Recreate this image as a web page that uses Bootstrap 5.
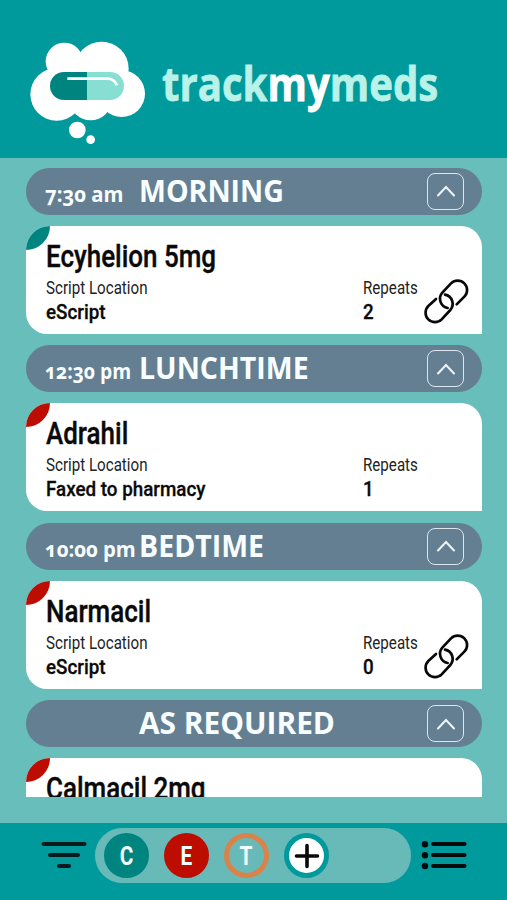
<!DOCTYPE html>
<html lang="en">
<head>
<meta charset="utf-8">
<meta name="viewport" content="width=device-width, initial-scale=1">
<title>trackmymeds</title>
<link rel="stylesheet" href="https://cdn.jsdelivr.net/npm/bootstrap@5.3.0/dist/css/bootstrap.min.css">
<style>
  body { background: #68bebb; color: #0a0a0a; font-family: Roboto, "Liberation Sans", sans-serif; }
  .screen { height: 900px; }
  .brand-bar { height: 158px; background: #009a9c; padding-left: 20px; }
  .brand-name { font: 700 46px/60px "Open Sans", "Noto Sans", sans-serif; color: #b9f2e8; transform: scaleX(.873); transform-origin: left; margin: 8px 0 0 2px; white-space: nowrap; -webkit-text-stroke: .8px currentColor; }
  .brand-name b { color: #fff; font-weight: 700; }
  .brand-logo { margin-top: 24px; }
  .schedule { height: 639px; padding: 9.5px 25px 0 26px; }
  .slot-bar { height: 47px; background: #647f92; border-radius: 24px; color: #f8fdff; padding: 0 18px 0 19px; margin-bottom: 11px; font-family: "Open Sans", "Noto Sans", sans-serif; font-weight: 700; white-space: nowrap; }
  .slot-time { width: 94px; font-size: 20.5px; line-height: 45px; font-feature-settings: "onum"; }
  .slot-name { font-size: 31px; line-height: 45px; margin: 0; font-weight: 700; }
  .squeeze { display: inline-block; transform-origin: left; }
  .slot-time .squeeze { transform: scaleX(.99); }
  .slot-time .squeeze.snug { transform: scaleX(.94); }
  .slot-name .squeeze { transform: scaleX(.92); }
  .slot-name .squeeze.roomy { transform: scaleX(.963); }
  .toggle { width: 37px; height: 37px; border: 1.6px solid #dbe6ee; border-radius: 8px; background: none; }
  .med { height: 108px; background: #fff; border-radius: 24px 21px 0 21px; padding: 13px 13px 0 20px; margin-bottom: 11.6px; white-space: nowrap; }
  .leaf { width: 24px; height: 24px; top: 0; left: 0; }
  .med-name { font-size: 31px; line-height: 36px; font-weight: 500; margin: 0 0 1px; -webkit-text-stroke: .4px currentColor; }
  .med-name .squeeze { transform: scaleX(.838); }
  .field-label { font-size: 17.5px; line-height: 24px; color: #222; }
  .field-label .squeeze { transform: scaleX(.865); }
  .field-value { font-size: 20.5px; line-height: 24px; font-weight: 500; -webkit-text-stroke: .3px currentColor; }
  .field-value .squeeze { transform: scaleX(.917); }
  .where { width: 317px; }
  .repeats { width: 61px; }
  .link-icon { margin-top: 3px; }
  .spacer { height: 26px; }
  .tool-bar { height: 77px; background: #009a9c; padding: 5px 39px 0 40px; }
  .filters { width: 316px; height: 55px; border-radius: 27px; background: #67bab7; padding-left: 9px; gap: 15px; margin-right: 2px; }
  .chip { width: 45px; height: 45px; border: 5px solid transparent; color: #f4ffff; font-size: 26px; font-weight: 700; line-height: 1; }
  .chip .squeeze { transform: scaleX(.8); transform-origin: center; }
  .chip-c { background: #008480; border-color: #008480; }
  .chip-e { background: #bd0d00; border-color: #bd0d00; }
  .chip-t { border-color: #d9834b; }
  .chip-add { background: #fff; border-color: #009a9c; }
</style>
<script src="https://cdn.jsdelivr.net/npm/bootstrap@5.3.0/dist/js/bootstrap.bundle.min.js"></script>
</head>
<body>
<svg width="0" height="0" class="d-none">
  <symbol id="leaf" viewBox="0 0 24 24"><path d="M0 24A24 24 0 0 1 24 0A24 24 0 0 1 0 24Z" fill="currentColor"/></symbol>
  <symbol id="chevron" viewBox="0 0 20 14"><path d="M2 11.5L10 3L18 11.5" fill="none" stroke="#eef5fa" stroke-width="2" stroke-linecap="round"/></symbol>
  <symbol id="chain" viewBox="42 27 135 135"><path d="M140 103L163 80A28 28 0 0 0 123 40L97 68A28 28 0 0 0 113 114M78 87L55 108A28 28 0 0 0 95 148L121 120A28 28 0 0 0 105 74" fill="none" stroke="#080808" stroke-width="8" stroke-linecap="round"/></symbol>
</svg>
<div class="screen d-flex flex-column overflow-hidden">
  <header class="brand-bar d-flex align-items-center">
    <svg class="brand-logo flex-shrink-0" width="140" height="120" viewBox="0 0 420 360">
      <g fill="#fff"><circle cx="133" cy="91" r="56"/><circle cx="245" cy="113" r="81"/><circle cx="110" cy="190" r="79"/><circle cx="305" cy="188" r="70"/><circle cx="212" cy="205" r="63"/><path d="M130 110H300V240H130Z"/><circle cx="172" cy="297" r="25"/><circle cx="212" cy="326" r="13"/></g>
      <path d="M201 123H132A42 42 0 0 0 132 207H201Z" fill="#008480"/>
      <path d="M201 123H270A42 42 0 0 1 270 207H201Z" fill="#86dfd2"/>
      <path d="M142 143H262Q283 143 291 163" fill="none" stroke="#fff" stroke-width="8.5"/>
    </svg>
    <div class="brand-name">track<b>my</b>meds</div>
  </header>

  <main class="schedule overflow-hidden">
    <div class="slot-bar d-flex align-items-center">
      <div class="d-flex align-items-baseline flex-grow-1 align-self-start"><div class="slot-time"><span class="squeeze">7:30 am</span></div><h2 class="slot-name"><span class="squeeze">MORNING</span></h2></div>
      <button class="toggle p-0 d-flex align-items-center justify-content-center" aria-label="Collapse"><svg width="20" height="14"><use href="#chevron"/></svg></button>
    </div>
    <article class="med position-relative">
      <svg class="leaf position-absolute" style="color:#008480"><use href="#leaf"/></svg>
      <h3 class="med-name"><span class="squeeze">Ecyhelion 5mg</span></h3>
      <div class="d-flex align-items-start">
        <div class="where"><div class="field-label"><span class="squeeze">Script Location</span></div><div class="field-value"><span class="squeeze">eScript</span></div></div>
        <div class="repeats"><div class="field-label"><span class="squeeze">Repeats</span></div><div class="field-value"><span class="squeeze">2</span></div></div>
        <svg class="link-icon" width="45" height="45"><use href="#chain"/></svg>
      </div>
    </article>

    <div class="slot-bar d-flex align-items-center">
      <div class="d-flex align-items-baseline flex-grow-1 align-self-start"><div class="slot-time"><span class="squeeze snug">12:30 pm</span></div><h2 class="slot-name"><span class="squeeze">LUNCHTIME</span></h2></div>
      <button class="toggle p-0 d-flex align-items-center justify-content-center" aria-label="Collapse"><svg width="20" height="14"><use href="#chevron"/></svg></button>
    </div>
    <article class="med position-relative">
      <svg class="leaf position-absolute" style="color:#bd0d00"><use href="#leaf"/></svg>
      <h3 class="med-name"><span class="squeeze">Adrahil</span></h3>
      <div class="d-flex align-items-start">
        <div class="where"><div class="field-label"><span class="squeeze">Script Location</span></div><div class="field-value"><span class="squeeze">Faxed to pharmacy</span></div></div>
        <div class="repeats"><div class="field-label"><span class="squeeze">Repeats</span></div><div class="field-value"><span class="squeeze">1</span></div></div>
      </div>
    </article>

    <div class="slot-bar d-flex align-items-center">
      <div class="d-flex align-items-baseline flex-grow-1 align-self-start"><div class="slot-time"><span class="squeeze">10:00 pm</span></div><h2 class="slot-name"><span class="squeeze">BEDTIME</span></h2></div>
      <button class="toggle p-0 d-flex align-items-center justify-content-center" aria-label="Collapse"><svg width="20" height="14"><use href="#chevron"/></svg></button>
    </div>
    <article class="med position-relative">
      <svg class="leaf position-absolute" style="color:#bd0d00"><use href="#leaf"/></svg>
      <h3 class="med-name"><span class="squeeze">Narmacil</span></h3>
      <div class="d-flex align-items-start">
        <div class="where"><div class="field-label"><span class="squeeze">Script Location</span></div><div class="field-value"><span class="squeeze">eScript</span></div></div>
        <div class="repeats"><div class="field-label"><span class="squeeze">Repeats</span></div><div class="field-value"><span class="squeeze">0</span></div></div>
        <svg class="link-icon" width="45" height="45"><use href="#chain"/></svg>
      </div>
    </article>

    <div class="slot-bar d-flex align-items-center">
      <div class="d-flex align-items-baseline flex-grow-1 align-self-start"><div class="slot-time"></div><h2 class="slot-name"><span class="squeeze roomy">AS REQUIRED</span></h2></div>
      <button class="toggle p-0 d-flex align-items-center justify-content-center" aria-label="Collapse"><svg width="20" height="14"><use href="#chevron"/></svg></button>
    </div>
    <article class="med position-relative">
      <svg class="leaf position-absolute" style="color:#bd0d00"><use href="#leaf"/></svg>
      <h3 class="med-name"><span class="squeeze">Calmacil 2mg</span></h3>
    </article>
  </main>
  <div class="spacer flex-shrink-0"></div>

  <footer class="tool-bar d-flex align-items-start justify-content-between flex-shrink-0">
    <svg width="48" height="55" viewBox="0 0 48 55" fill="none" stroke="#0b1a1c" stroke-width="4" stroke-linecap="round"><path d="M3.5 16H44.5M10 27H38M19 38H29"/></svg>
    <div class="filters d-flex align-items-center">
      <div class="chip chip-c rounded-circle d-flex align-items-center justify-content-center"><span class="squeeze">C</span></div>
      <div class="chip chip-e rounded-circle d-flex align-items-center justify-content-center"><span class="squeeze">E</span></div>
      <div class="chip chip-t rounded-circle d-flex align-items-center justify-content-center"><span class="squeeze">T</span></div>
      <div class="chip chip-add rounded-circle d-flex align-items-center justify-content-center"><svg width="26" height="26" viewBox="0 0 26 26" stroke="#0a0a0a" stroke-width="3.6" stroke-linecap="round"><path d="M13 2.500V23.500M2.500 13H23.500"/></svg></div>
    </div>
    <svg width="48" height="55" viewBox="0 0 48 55" stroke="#050a0a" stroke-width="4" stroke-linecap="round"><path d="M13 16H44.500M13 27H44.500M13 38H44.500"/><path d="M5 16.200h.01M5 27.200h.01M5 38h.01" stroke-width="6.500"/></svg>
  </footer>
</div>
</body>
</html>
